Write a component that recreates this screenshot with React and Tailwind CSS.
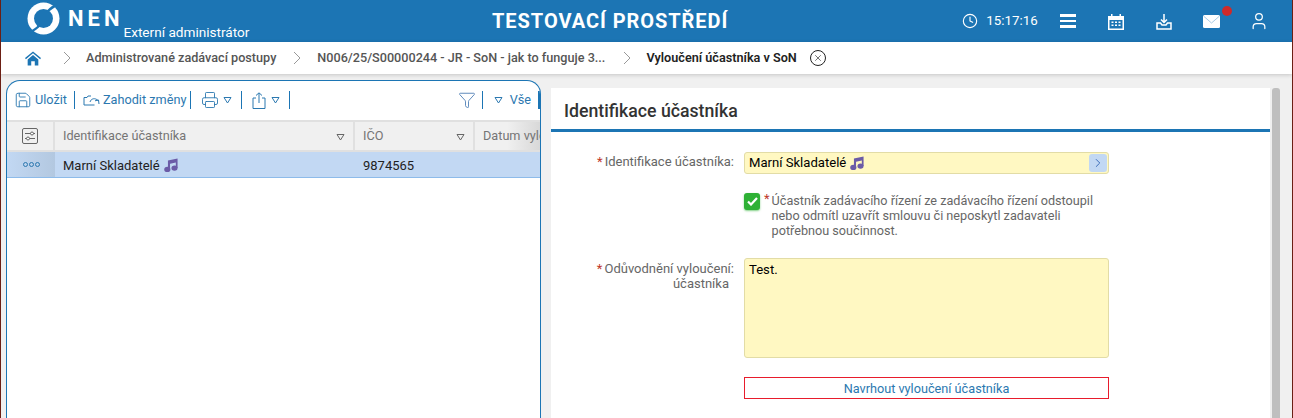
import { Clock, Printer, Save, Funnel, X, ChevronRight, User } from "lucide-react";

function Triangle({ className }) {
  return (
    <svg width="9" height="8" viewBox="0 0 9 8" fill="none" stroke="currentColor" className={className}>
      <path d="M1 1.5h7L4.5 7z" />
    </svg>
  );
}

function Note({ size = 16 }) {
  return (
    <svg width={size} height={size} viewBox="0 0 16 16" fill="#6b5ba7">
      <ellipse cx="3.800" cy="13" rx="3.500" ry="3" />
      <ellipse cx="12" cy="11.500" rx="3.500" ry="3" />
      <path d="M4.500 13h2.400V6.500l6.600-1.300v6.300h2V0.500L4.500 2.800z" />
    </svg>
  );
}

function Logo() {
  return (
    <svg width="33" height="33" viewBox="0 0 33 33">
      <circle cx="16.500" cy="16.500" r="16" fill="white" />
      <circle cx="16.500" cy="16.500" r="9.500" fill="#1c75b4" />
      <path d="M30 3C27 4 24 6 20 10" fill="none" stroke="#1c75b4" strokeWidth="2.400" />
      <path d="M3 30c3-1 6-3 10-7" fill="none" stroke="#1c75b4" strokeWidth="2.400" />
    </svg>
  );
}

function Divider({ className = "" }) {
  return <span className={`h-[18px] w-px shrink-0 bg-[#1c75b4] ${className}`} />;
}

function Crumb({ className }) {
  return (
    <svg width="8" height="14" viewBox="0 0 8 14" fill="none" stroke="#999" className={className}>
      <path d="m1 1 6 6-6 6" />
    </svg>
  );
}

function HeaderCell({ children, width, filter }) {
  return (
    <div className={`${width} flex items-center justify-between border-r-2 border-[#e0e0e0] pl-2 pr-[8px] pt-[1px] text-[#757575]`}>
      <span className="whitespace-nowrap">{children}</span>
      {filter && <Triangle className="text-[#666]" />}
    </div>
  );
}

export default function App() {
  return (
    <div className="flex h-[418px] w-[1293px] flex-col overflow-hidden border-x border-[#6b1f14] bg-[#f0f0f0] font-['Roboto',sans-serif] text-[13px] leading-none">
      <header className="flex h-[42px] shrink-0 items-center bg-[#1c75b4] text-white">
        <div className="flex w-[491px] items-start pl-[26px]">
          <Logo />
          <span className="ml-[8px] mt-[6px] text-[22px] font-bold tracking-[4px]">NEN</span>
          <span className="mt-[24px] whitespace-nowrap text-[13.600px]">Externí administrátor</span>
        </div>
        <h1 className="whitespace-nowrap text-[20px] font-bold tracking-[0.950px]">TESTOVACÍ PROSTŘEDÍ</h1>
        <div className="ml-[234px] flex items-center">
          <Clock size={16} strokeWidth={1.700} />
          <span className="ml-[8px] w-[50px] whitespace-nowrap text-[13.300px]">15:17:16</span>
          <div className="ml-[24px] flex w-[16px] flex-col gap-[3px]">
            <span className="h-[2.500px] bg-white" />
            <span className="h-[2.500px] bg-white" />
            <span className="h-[2.500px] bg-white" />
          </div>
          <svg className="ml-[32px]" width="16" height="17" viewBox="0 0 16 17" fill="white">
            <path d="M0 3h3V1h1.500v2h7V1H13v2h3v14H0zm1.500 4v8.500h13V7z" />
            <path d="M3.500 8.500h2v1.500h-2zM7 8.500h2v1.500H7zm3.500 0h2v1.500h-2zM3.500 11.500h2V13h-2zm3.500 0h2V13H7zm3.500 0h2V13h-2z" />
          </svg>
          <svg className="ml-[32px]" width="16" height="17" viewBox="0 0 16 17" fill="none" stroke="white" strokeWidth="1.500">
            <path d="M8 1v8M5 6.500 8 9.500l3-3" />
            <path d="M1 10v6h14v-6h-3.500L10 12H6l-1.500-2z" />
          </svg>
          <div className="relative ml-[31px]">
            <svg width="17" height="13" viewBox="0 0 17 13" className="block">
              <rect width="17" height="13" rx="1.500" fill="white" />
              <path d="M1 1.500 8.500 8 16 1.500" fill="none" stroke="#a9cbe4" strokeWidth="1" />
            </svg>
            <span className="absolute left-[19px] top-[-9px] h-[10px] w-[10px] rounded-full bg-[#cf2a2a]" />
          </div>
          <User className="ml-[29px]" size={20} strokeWidth={1.500} />
        </div>
      </header>

      <nav className="z-10 flex h-[32px] shrink-0 items-center bg-white pl-[24px] text-[12.650px] font-medium text-[#555] shadow-[0_1px_4px_rgba(0,0,0,0.18)]">
        <svg width="16" height="15" viewBox="0 0 18 16" fill="#1c75b4">
          <path d="M9 0 0 7.500l1 1.300L9 2.200l8 6.600 1-1.300z" />
          <path d="M3 9 9 4l6 5v7h-4v-5H7v5H3z" />
        </svg>
        <Crumb className="ml-[22px]" />
        <span className="ml-[15px] whitespace-nowrap">Administrované zadávací postupy</span>
        <Crumb className="ml-[17px]" />
        <span className="ml-[16px] whitespace-nowrap">N006/25/S00000244 - JR - SoN - jak to funguje 3...</span>
        <Crumb className="ml-[18px]" />
        <span className="ml-[15px] whitespace-nowrap font-semibold text-[#222]">Vyloučení účastníka v SoN</span>
        <span className="ml-[13px] flex h-[16px] w-[16px] items-center justify-center rounded-full border border-[#222] text-[#222]">
          <X size={10} strokeWidth={1.500} />
        </span>
      </nav>

      <main className="flex min-h-0 flex-1 pl-[5px] pr-[12px] pt-[6px]">
        <section className="w-[535px] shrink-0 overflow-hidden rounded-t-[14px] border border-b-0 border-[#1c75b4] bg-white">
          <div className="flex h-[39px] items-center pb-[1px] pl-[7px] text-[12.700px] text-[#2b78b0]">
            <Save size={18} strokeWidth={1.200} />
            <span className="ml-[3px] mr-[7px]">Uložit</span>
            <Divider />
            <svg className="ml-[8px] mr-[3px]" width="17" height="12" viewBox="0 0 17 12" fill="none" stroke="currentColor">
              <path d="M1 3.500V11h10.500M1 3.500h3l1-1.500h3M7 8c1-3.500 5-4.500 8-1.500M16 10l-.5-4-3.500.8" />
            </svg>
            <span className="mr-[4px] whitespace-nowrap">Zahodit změny</span>
            <Divider />
            <Printer className="ml-[10px]" size={18} strokeWidth={1.200} />
            <Triangle className="ml-[4px] mr-[9px]" />
            <Divider />
            <svg className="ml-[10px]" width="14" height="17" viewBox="0 0 14 17" fill="none" stroke="currentColor">
              <path d="M4 6H1v10.500h12V6h-3M7 11V1M4 3.500 7 .8l3 2.700" />
            </svg>
            <Triangle className="ml-[5px] mr-[9px]" />
            <Divider />
            <Funnel className="ml-auto text-[#4f7fb5]" size={18} strokeWidth={1.200} />
            <Divider className="ml-[6px]" />
            <Triangle className="ml-[11px] shrink-0" />
            <span className="ml-[7px] mr-[7px]">Vše</span>
            <span className="h-[18px] w-[2px] shrink-0 bg-[#1c75b4]" />
          </div>
          <div className="flex h-[32px] border-y-2 border-[#e0e0e0] bg-[#f0f0f0] text-[12.700px]">
            <div className="flex w-[48px] items-center justify-center border-r-2 border-[#e0e0e0]">
              <svg width="16" height="16" viewBox="0 0 16 16" fill="none" stroke="#666">
                <rect x="0.500" y="0.500" width="15" height="15" rx="1.500" />
                <path d="M3 5.500h10M3 10.500h10" />
                <circle cx="10" cy="5.500" r="1.500" fill="white" />
                <circle cx="6" cy="10.500" r="1.500" fill="white" />
              </svg>
            </div>
            <HeaderCell width="w-[300px]" filter>Identifikace účastníka</HeaderCell>
            <HeaderCell width="w-[120px]" filter>IČO</HeaderCell>
            <div className="flex min-w-0 flex-1 items-center overflow-hidden bg-gradient-to-r from-[#f0f0f0] from-50% to-[#d8d8d8] pl-2 pt-[1px] text-[#757575]">
              <span className="whitespace-nowrap">Datum vyloučení</span>
            </div>
          </div>
          <div className="flex h-[26px] items-center border-b border-[#8dbbea] bg-[#c2d8f3] text-[#222]">
            <div className="flex h-full w-[48px] items-center justify-center gap-[1px] bg-gradient-to-r from-[#c2d8f3] to-[#b3c8e0]">
              <span className="h-[5px] w-[5px] rounded-full border border-[#2b78b0]" />
              <span className="h-[5px] w-[5px] rounded-full border border-[#2b78b0]" />
              <span className="h-[5px] w-[5px] rounded-full border border-[#2b78b0]" />
            </div>
            <div className="flex w-[300px] items-center gap-[4px] pl-[8px] pt-[1px]">
              Marní Skladatelé <Note size={14} />
            </div>
            <div className="pl-[8px] pt-[1px]">9874565</div>
          </div>
        </section>

        <div className="ml-[10px] mt-[8px] min-w-0 flex-1 bg-white">
          <h2 className="flex h-[44px] items-center border-b-[3px] border-[#1c75b4] pl-[13px] pt-[6px] text-[17.700px] font-medium text-[#333]">
            Identifikace účastníka
          </h2>
          <div className="grid grid-cols-[183px_365px] gap-x-[10px] pt-[20px]">
            <label className="pt-[3px] text-right text-[#666]">
              <span className="mr-[2px] text-[#c0392b]">*</span>Identifikace účastníka:
            </label>
            <div className="flex h-[22px] items-center rounded-[3px] border border-[#e2dca6] bg-[#fff8c2] pl-[4px] pr-[1px] text-[13.100px] text-black">
              <span className="flex flex-1 items-center gap-[4px]">Marní Skladatelé <Note size={14} /></span>
              <span className="flex h-[18px] w-[18px] items-center justify-center rounded-[3px] bg-[#c2d8f3] text-[#2b5fb0]">
                <ChevronRight size={14} strokeWidth={1.500} />
              </span>
            </div>

            <div className="col-start-2 mt-[18px] flex">
              <span className="mt-[1px] flex h-[17px] w-[16px] shrink-0 items-center justify-center rounded-[3px] bg-[#2eb135] shadow-[0_1px_2px_rgba(46,177,53,0.6)]">
                <svg width="11" height="9" viewBox="0 0 11 9" fill="none" stroke="white" strokeWidth="2.200">
                  <path d="m1 4.500 3 3L10 1" />
                </svg>
              </span>
              <span className="ml-[4px] text-[#c0392b]">*</span>
              <p className="ml-[2px] mt-[1px] w-[337px] text-[12.650px] leading-[15px] text-[#666]">
                Účastník zadávacího řízení ze zadávacího řízení odstoupil nebo odmítl uzavřít smlouvu či neposkytl zadavateli potřebnou součinnost.
              </p>
            </div>

            <label className="mt-[21px] pt-[2px] text-right leading-[15px] text-[#666]">
              <span className="mr-[2px] text-[#c0392b]">*</span>Odůvodnění vyloučení:<br />
              <span className="pr-[5px]">účastníka</span>
            </label>
            <div className="mt-[20px] h-[100px] rounded-[3px] border border-[#e2dca6] bg-[#fff8c2] p-[4px] text-[13.100px] text-black">
              Test.
            </div>

            <button className="col-start-2 mt-[19px] h-[22px] border border-[#e81c2c] bg-white pt-[2px] text-[12.700px] text-[#2b78b0]">
              Navrhout vyloučení účastníka
            </button>
          </div>
        </div>
        <div className="ml-[2px] mt-[8px] w-[8px] shrink-0 rounded-t-[3px] bg-[#bfbfbf]" />
      </main>
    </div>
  );
}
